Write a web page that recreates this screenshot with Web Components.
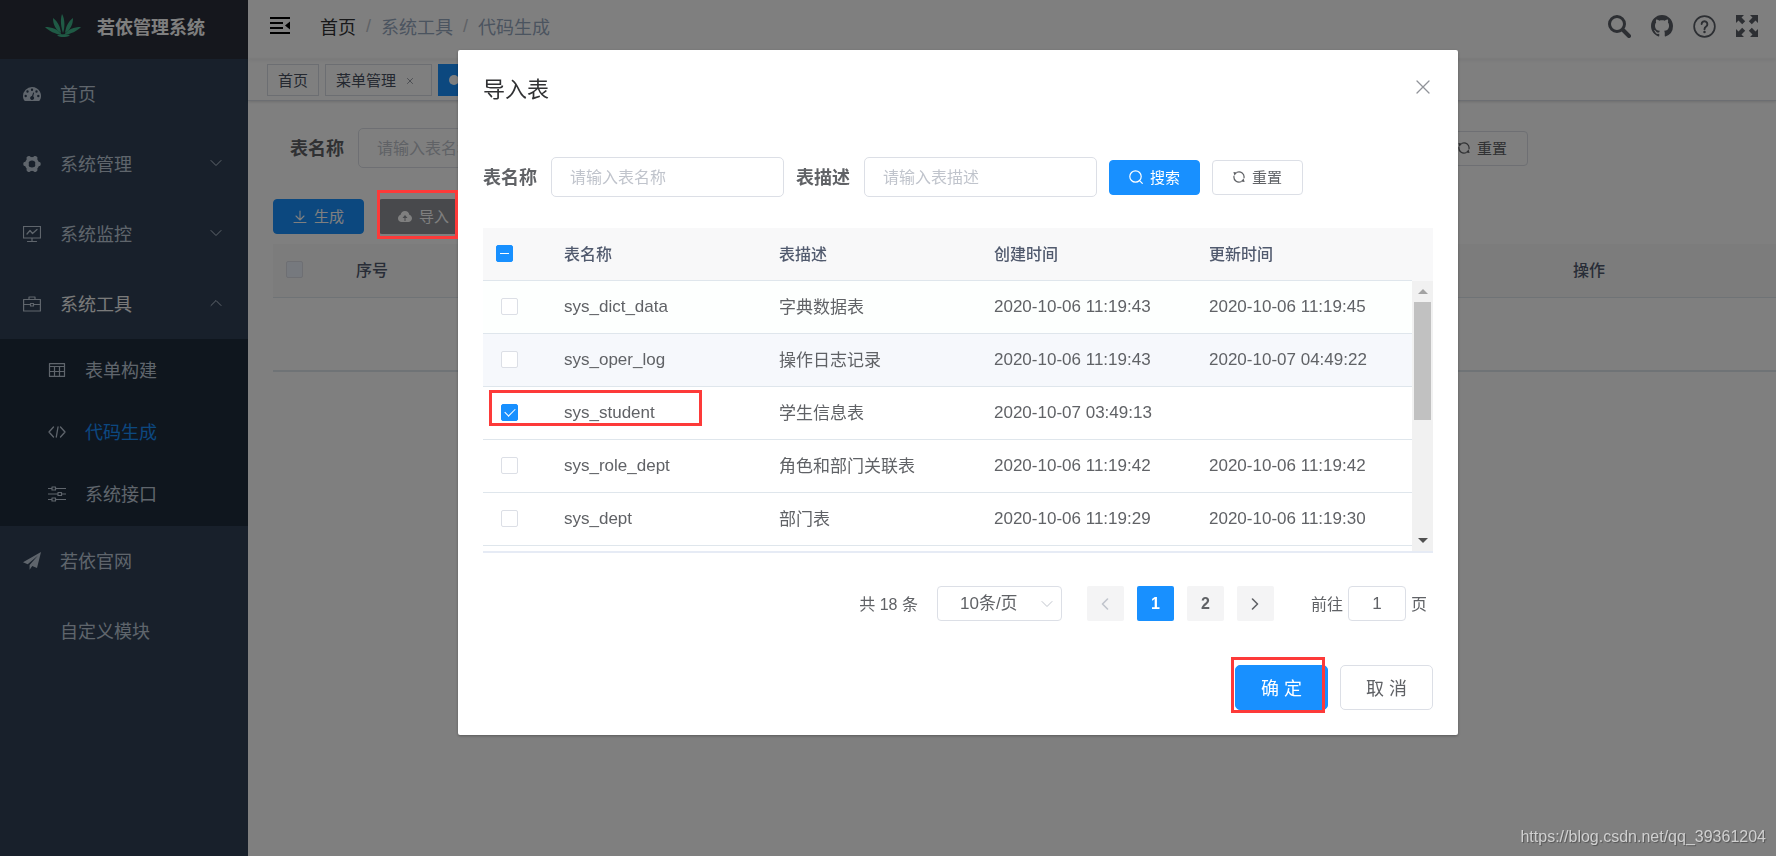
<!DOCTYPE html>
<html lang="zh-CN">
<head>
<meta charset="utf-8">
<title>若依管理系统</title>
<style>
html, body { margin: 0; height: 100%; }
body {
  font-family: "Liberation Sans", "Noto Sans CJK SC", sans-serif;
  font-size: 17px; color: #606266; background: #fff; overflow: hidden;
}
</style>
</head>
<body>
<ry-app></ry-app>
<script>
const line = (d, w = 1) => `<path d="${d}" fill="none" stroke="currentColor" stroke-width="${w}" stroke-linecap="round" stroke-linejoin="round"/>`;
const ICONS = {
  logo: ['0 0 36 24', `<g fill="#3fb58a"><path d="M17 0c3 5 3 13 1 19-2-6-3-13-1-19z"/><path d="M8 4c5 4 7 8 8 15C11 16 8 11 8 4z"/><path d="M28 4c-5 4-7 8-8 15 5-3 8-8 8-15z"/><path d="M0 13c7 0 13 2 17 8C10 20 4 17 0 13z"/><path d="M36 13c-7 0-13 2-17 8 7-1 13-4 17-8z"/><path d="M12 21c4-1 9-1 13 0-2 2-5 2-7 2s-4 0-6-2z"/></g>`],
  dashboard: ['0 0 18 14', `<path fill="currentColor" fill-rule="evenodd" d="M9 0a9 9 0 0 0-9 9c0 1.700.5 3.300 1.300 4.600.2.300.5.400.8.400h13.800c.3 0 .6-.1.8-.4A9 9 0 0 0 9 0zM9 1.500a1.200 1.200 0 1 1 0 2.400 1.200 1.200 0 0 1 0-2.400zM4.500 3.300a1.200 1.200 0 1 1 0 2.400 1.200 1.200 0 0 1 0-2.400zM13.500 3.300a1.200 1.200 0 1 1 0 2.400 1.200 1.200 0 0 1 0-2.400zM2.700 7.800a1.200 1.200 0 1 1 0 2.400 1.200 1.200 0 0 1 0-2.400zM15.300 7.800a1.200 1.200 0 1 1 0 2.400 1.200 1.200 0 0 1 0-2.400zM10.200 5.500l1 .3-1 3.500a2 2 0 1 1-1.200-.3z"/>`],
  gear: ['0 0 18 18', `<circle cx="9" cy="9" r="5.300" fill="none" stroke="currentColor" stroke-width="3.400"/>` + line('M14.500 9h1M12 14.200l.2.400M6 14.200l-.2.400M3.500 9h-1M6 3.800l-.2-.4M12 3.800l.2-.4', 4.6)],
  monitor: ['0 0 18 18', line('M.5 1.500h17v11.500H.5zM9 13v3.500M4.500 16.500h9M4 9l3-3.500 2.500 3L14 4.500', 1.2)],
  toolbox: ['0 0 18 16', line('M.6 3.500h16.800v11.500H.6zM6 3.500V1h6v2.500M1 8.500h6.500M10.500 8.500H17M7.500 7.500h3v2.500h-3z', 1.2)],
  grid: ['0 0 18 14', line('M1.500 .6h15v12.800h-15zM1.500 3.500h15M1.500 8.500h15M6.500 3.500v10M11.500 3.500v10', 1.2)],
  code: ['0 0 18 14', line('M5.500 2L1 7l4.500 5M12.500 2L17 7l-4.500 5M10 2L8.300 12', 1.3)],
  sliders: ['0 0 18 16', line('M.5 2.500h3.500M7.500 2.500H17.500M.5 8h9.500M13.500 8h4M.5 13.500h3.500M7.500 13.500h10M4 1h3.500v3H4zM10 6.500h3.500v3H10zM4 12h3.500v3H4z', 1.2)],
  plane: ['0 0 18 18', `<path fill="currentColor" d="M18 0L0 10.200l4.700 2L15 3.600 6.600 13v4.700l2.600-3.600 4.800 2z"/>`],
  down: ['0 0 12 8', line('M1 1.500l5 5 5-5')],
  up: ['0 0 12 8', line('M1 6.500l5-5 5 5')],
  left: ['0 0 8 12', line('M6.500 1l-5 5 5 5', 1.600)],
  right: ['0 0 8 12', line('M1.500 1l5 5-5 5', 1.600)],
  close: ['0 0 14 14', line('M1 1l12 12M13 1L1 13', 1.3)],
  fold: ['0 0 20 18', `<path fill="currentColor" d="M0 0h20v2H0zM0 5h13v2H0zM0 10h13v2H0zM0 15h20v2H0zM20 4.500v8l-5-4z"/>`],
  find: ['0 0 23 23', `<circle cx="9" cy="9" r="7.500" fill="none" stroke="currentColor" stroke-width="3"/>` + line('M15 15l6 6', 4)],
  github: ['0 0 16 16', `<path fill="currentColor" d="M8 0C3.580 0 0 3.580 0 8c0 3.540 2.290 6.530 5.470 7.590.4.070.55-.17.55-.38 0-.19-.01-.82-.01-1.490-2.010.37-2.530-.49-2.690-.94-.09-.23-.48-.94-.82-1.130-.28-.15-.68-.52-.01-.53.63-.01 1.080.58 1.230.82.72 1.210 1.870.87 2.330.66.07-.52.28-.87.51-1.070-1.780-.2-3.640-.89-3.640-3.950 0-.87.31-1.590.82-2.150-.08-.2-.36-1.020.08-2.120 0 0 .67-.21 2.200.82.64-.18 1.320-.27 2-.27.68 0 1.360.09 2 .27 1.530-1.040 2.200-.82 2.200-.82.44 1.100.16 1.920.08 2.120.51.56.82 1.270.82 2.150 0 3.070-1.870 3.750-3.650 3.950.29.25.54.73.54 1.480 0 1.070-.01 1.930-.01 2.200 0 .21.15.46.55.38A8.013 8.013 0 0 0 16 8c0-4.420-3.580-8-8-8z"/>`],
  help: ['0 0 24 24', `<circle cx="12" cy="12" r="10.800" fill="none" stroke="currentColor" stroke-width="1.800"/>` + line('M9 9.500a3 3 0 1 1 4.700 2.500c-1.200.8-1.700 1.300-1.700 2.800', 2) + `<circle cx="12" cy="17.800" r="1.300" fill="currentColor"/>`],
  full: ['0 0 22 22', `<path fill="currentColor" d="M0 0h8L5.500 2.500l3.700 3.700-3 3-3.700-3.700L0 8zM22 0h-8l2.500 2.500-3.700 3.700 3 3 3.700-3.700L22 8zM0 22h8l-2.500-2.500 3.700-3.700-3-3-3.700 3.700L0 14zM22 22h-8l2.500-2.500-3.700-3.700 3-3 3.700 3.700L22 14z"/>`],
  download: ['0 0 14 14', line('M7 1v8.500M3 6l4 4 4-4M1 12.500h12', 1.1)],
  cloud: ['0 0 14 12', `<path fill="currentColor" fill-rule="evenodd" d="M7 0c2.300 0 4 1.500 4.300 3.700C13 4.300 14 5.700 14 7.300 14 9.700 12.200 11 10.200 11H3.600C1.600 11 0 9.500 0 7.400c0-1.700 1-3 2.600-3.600C3 1.500 4.700 0 7 0zM7 4L4.500 7h2v3h1V7h2z"/>`],
  search: ['0 0 14 14', `<circle cx="6.500" cy="6.500" r="5.700" fill="none" stroke="currentColor" stroke-width="1.200"/>` + line('M10.800 10.800l2.500 2.500', 1.2)],
  refresh: ['0 0 12 12', line('M4 1.200A5.200 5.200 0 0 1 11 7M8 10.800A5.200 5.200 0 0 1 1 5', 1.2) + `<path fill="currentColor" d="M.4 1l4 .6L1.400 4.600zM11.600 11l-4-.6 3-3z"/>`],
};

class View extends HTMLElement {
  connectedCallback() {
    if (this.shadowRoot) return;
    const t = document.createElement('template');
    t.innerHTML = `<style>*{box-sizing:border-box}${this.css()}</style>${this.html()}`;
    this.attachShadow({ mode: 'open' }).append(t.content.cloneNode(true));
  }
  css() { return ''; }
  html() { return '<slot></slot>'; }
}
const define = (name, css, html) => customElements.define(name, class extends View {
  css() { return css; }
  html() { return typeof html === 'function' ? html(this) : html; }
});

define('ry-icon', `:host{display:inline-flex;flex:none} svg{display:block}`, el => {
  const [box, body] = ICONS[el.getAttribute('name')];
  const [, , w, h] = box.split(' ').map(Number);
  const width = Number(el.getAttribute('size')) || w;
  return `<svg viewBox="${box}" width="${width}" height="${Math.round(width * h / w)}" aria-hidden="true">${body}</svg>`;
});

define('ry-button', `
  :host{display:inline-flex}
  button{font:inherit;font-size:15px;color:#606266;background:#fff;border:1px solid #dcdfe6;border-radius:4px;
    height:35px;width:91px;padding:0;display:flex;align-items:center;justify-content:center;gap:7px;white-space:nowrap;cursor:pointer}
  span{padding-bottom:2px}
  :host([type=primary]) button{background:#1890ff;border-color:#1890ff;color:#fff}
  :host([type=info]) button{background:#909399;border-color:#909399;color:#fff}
  :host([size=large]) button{height:45px;width:93px;font-size:18px;border-radius:5px}`,
  el => `<button type="button">${el.hasAttribute('icon') ? `<ry-icon name="${el.getAttribute('icon')}"></ry-icon>` : ''}<span><slot></slot></span></button>`);

define('ry-field', `
  :host{display:flex;align-items:center}
  label{font-size:18px;font-weight:700;color:#606266;width:68px;padding-bottom:2px;white-space:nowrap}
  input{font:inherit;font-size:16px;width:233px;height:40px;border:1px solid #dcdfe6;border-radius:5px;padding:1px 18px 0;background:#fff;color:#606266;outline:0}
  input::placeholder{color:#c0c4cc;opacity:1}`,
  el => `<label for="in">${el.getAttribute('label')}</label><input id="in" type="text" placeholder="请输入${el.getAttribute('label')}">`);

define('ry-check', `
  :host{display:block;width:17px;height:17px}
  input{appearance:none;display:grid;place-items:center;margin:0;width:17px;height:17px;border:1px solid #dcdfe6;border-radius:2px;background:#fff}
  input[disabled]{background:#edf2fc}
  :host([state=on]) input,:host([state=mixed]) input{background:#1890ff;border-color:#1890ff}
  :host([state=mixed]) input::after{content:"";width:9px;height:1px;background:#fff}
  :host([state=on]) input::after{content:"";width:5px;height:9px;margin-bottom:3px;border:solid #fff;border-width:0 1px 1px 0;transform:rotate(45deg)}`,
  el => `<input type="checkbox" aria-label="${el.getAttribute('label')}"${el.getAttribute('state') === 'on' ? ' checked' : ''}${el.hasAttribute('disabled') ? ' disabled' : ''}>`);

define('ry-mark', `:host{display:block;position:absolute;border:3px solid #fd3a39;box-sizing:border-box;pointer-events:none}`, '');

define('ry-menu-item', `
  :host{display:block;color:#bfcbd9;font-size:18px}
  a{display:flex;align-items:center;height:70px;padding:0 26px 0 23px;color:inherit;text-decoration:none}
  .ico{width:37px;display:flex;align-items:center}
  .txt{flex:1;padding-bottom:2px;white-space:nowrap}
  .arrow{margin-bottom:2px}
  :host([open]){color:#f4f4f5}
  :host([open]) .ico,:host([open]) .arrow{color:#bfcbd9}
  :host([sub]) a{height:62px;padding-left:48px}
  :host([active]) .txt{color:#1890ff}`,
  el => {
    const ico = el.getAttribute('icon'), arrow = el.getAttribute('arrow');
    return `<a href="#"><span class="ico">${ico ? `<ry-icon name="${ico}"></ry-icon>` : ''}</span><span class="txt"><slot></slot></span>${arrow ? `<ry-icon class="arrow" name="${arrow}"></ry-icon>` : ''}</a>`;
  });

define('ry-sidebar', `
  :host{display:block;width:248px;background:#304156;flex:none}
  .logo{height:59px;background:#2b2f3a;display:flex;align-items:center;gap:16px;padding-left:45px;padding-bottom:8px}
  h1{margin:0;font-size:18px;font-weight:700;color:#fff;white-space:nowrap}
  .sub{background:#1f2d3d;padding-bottom:1px}`,
  `<header class="logo"><ry-icon name="logo"></ry-icon><h1>若依管理系统</h1></header>
  <nav>
    <ry-menu-item icon="dashboard">首页</ry-menu-item>
    <ry-menu-item icon="gear" arrow="down">系统管理</ry-menu-item>
    <ry-menu-item icon="monitor" arrow="down">系统监控</ry-menu-item>
    <ry-menu-item icon="toolbox" arrow="up" open>系统工具</ry-menu-item>
    <div class="sub">
      <ry-menu-item icon="grid" sub>表单构建</ry-menu-item>
      <ry-menu-item icon="code" sub active>代码生成</ry-menu-item>
      <ry-menu-item icon="sliders" sub>系统接口</ry-menu-item>
    </div>
    <ry-menu-item icon="plane">若依官网</ry-menu-item>
    <ry-menu-item>自定义模块</ry-menu-item>
  </nav>`);

define('ry-navbar', `
  :host{display:flex;align-items:center;justify-content:space-between;height:59px;padding:0 18px 7px 22px;box-sizing:border-box;box-shadow:0 1px 4px rgba(0,21,41,.08)}
  nav{display:flex;align-items:center;font-size:18px;color:#97a8be}
  nav ry-icon{color:#000;margin-right:30px}
  nav a{color:#303133;text-decoration:none}
  i{font-style:normal;color:#c0c4cc;margin:0 10px}
  .tools{display:flex;align-items:center;gap:20px;color:#5a5e66}`,
  `<nav aria-label="breadcrumb"><ry-icon name="fold"></ry-icon><a href="#">首页</a><i>/</i><span>系统工具</span><i>/</i><span>代码生成</span></nav>
  <div class="tools"><ry-icon name="find"></ry-icon><ry-icon name="github" size="22"></ry-icon><ry-icon name="help" size="23"></ry-icon><ry-icon name="full"></ry-icon></div>`);

define('ry-tags', `
  :host{display:flex;align-items:center;gap:6px;height:42px;padding:0 19px;box-sizing:border-box;border-bottom:1px solid #d8dce5;box-shadow:0 1px 3px rgba(0,0,0,.12),0 0 3px rgba(0,0,0,.04)}
  a{display:flex;align-items:center;height:32px;padding:0 10px;border:1px solid #d8dce5;color:#495060;font-size:15px;text-decoration:none;background:#fff}
  .shut{margin:2px 8px 0 11px}
  .on{background:#1890ff;border-color:#1890ff;width:106px}
  .on::before{content:"";width:10px;height:10px;border-radius:50%;background:#fff}`,
  `<a href="#">首页</a><a href="#">菜单管理<ry-icon class="shut" name="close" size="6"></ry-icon></a><a class="on" href="#" aria-label="代码生成"></a>`);

define('ry-page', `
  :host{display:block;padding:27px 0 0 25px}
  form{display:flex;align-items:center;justify-content:space-between;padding-left:17px;margin-right:248px}
  .bar{display:flex;gap:14px;margin:31px 0 10px}
  table{width:100%;border-collapse:collapse;table-layout:fixed}
  th{height:53px;padding:0 12px 2px;background:#f8f8f9;border-bottom:1px solid #dfe6ec;color:#515a6e;font-size:16px;font-weight:500}
  th:first-child{padding-left:13px}
  td{height:74px;padding:0;border-bottom:2px solid #dfe6ec}`,
  `<form><ry-field label="表名称"></ry-field><ry-button icon="refresh">重置</ry-button></form>
  <div class="bar"><ry-button type="primary" icon="download">生成</ry-button><ry-button type="info" icon="cloud">导入</ry-button></div>
  <table>
    <colgroup><col style="width:69px"><col style="width:60px"><col><col style="width:374px"></colgroup>
    <thead><tr><th><ry-check disabled label="全选"></ry-check></th><th>序号</th><th></th><th>操作</th></tr></thead>
    <tbody><tr><td colspan="4"></td></tr></tbody>
  </table>`);

const ROWS = [
  ['sys_dict_data', '字典数据表', '2020-10-06 11:19:43', '2020-10-06 11:19:45'],
  ['sys_oper_log', '操作日志记录', '2020-10-06 11:19:43', '2020-10-07 04:49:22'],
  ['sys_student', '学生信息表', '2020-10-07 03:49:13', ''],
  ['sys_role_dept', '角色和部门关联表', '2020-10-06 11:19:42', '2020-10-06 11:19:42'],
  ['sys_dept', '部门表', '2020-10-06 11:19:29', '2020-10-06 11:19:30'],
];
const COLS = '<colgroup><col style="width:69px"><col><col><col><col></colgroup>';

define('ry-import-table', `
  :host{display:block;border-bottom:2px solid #e6ebf5}
  .head{background:#f8f8f9;padding-right:21px}
  table{width:100%;border-collapse:separate;border-spacing:0;table-layout:fixed}
  th,td{height:53px;padding:0 12px;border-bottom:1px solid #dfe6ec;text-align:left;white-space:nowrap}
  th{color:#515a6e;font-size:16px;font-weight:500;padding-bottom:2px}
  th:first-child{padding-left:13px}
  td:first-child{padding:0 0 2px 18px}
  td:nth-child(3){padding-bottom:3px}
  .body{display:flex;height:270px}
  .view{flex:1;overflow:hidden;position:relative}
  .view tr:nth-child(1) td{background:#fdfffe}
  .view tr:nth-child(2) td{background:#f6f8fc}
  .track{width:21px;background:#f1f1f1;display:flex;flex-direction:column;align-items:center}
  .track i{height:21px;display:flex;align-items:center}
  .track i::before{content:"";border:5px solid transparent;border-top:0;border-bottom-color:#a3a3a3}
  .track i:last-child::before{border-top:5px solid #505050;border-bottom:0}
  .thumb{width:17px;height:118px;background:#c1c1c1;margin-bottom:auto}
  ry-mark{left:6px;top:109px;width:213px;height:36px}`,
  `<div class="head"><table>${COLS}<thead><tr><th><ry-check state="mixed" label="全选"></ry-check></th><th>表名称</th><th>表描述</th><th>创建时间</th><th>更新时间</th></tr></thead></table></div>
  <div class="body"><div class="view"><table>${COLS}<tbody>${ROWS.map(r =>
    `<tr><td><ry-check label="${r[0]}"${r[0] === 'sys_student' ? ' state="on"' : ''}></ry-check></td>${r.map(c => `<td>${c}</td>`).join('')}</tr>`).join('')}</tbody></table><ry-mark></ry-mark></div>
  <div class="track"><i></i><div class="thumb"></div><i></i></div></div>`);

define('ry-pagination', `
  :host{display:flex;align-items:center;justify-content:flex-end;font-size:16px;color:#606266;padding-right:6px}
  .total,.unit{padding-bottom:2px}
  .size{display:grid;align-items:center;margin:0 25px 0 19px}
  .size>*{grid-area:1/1}
  .size ry-icon{justify-self:end;margin-right:9px;color:#c0c4cc}
  select,input{appearance:none;font:inherit;font-size:17px;height:35px;border:1px solid #dcdfe6;border-radius:4px;background:#fff;color:#606266}
  select{width:125px;padding:0 0 0 22px}
  input{width:58px;text-align:center;padding:0;margin:0 5px}
  .pages{display:flex;gap:13px;margin-right:37px}
  button{width:37px;height:35px;border:0;border-radius:2px;background:#f4f4f5;color:#606266;font:inherit;font-weight:700;padding:0;display:grid;place-items:center}
  button[disabled]{color:#c0c4cc}
  .on{background:#1890ff;color:#fff}
  label{display:flex;align-items:center}`,
  `<span class="total">共 18 条</span>
  <span class="size"><select aria-label="每页条数"><option>10条/页</option></select><ry-icon name="down"></ry-icon></span>
  <span class="pages"><button type="button" disabled aria-label="上一页"><ry-icon name="left"></ry-icon></button><button type="button" class="on">1</button><button type="button">2</button><button type="button" aria-label="下一页"><ry-icon name="right"></ry-icon></button></span>
  <label><span class="unit">前往</span><input type="text" value="1"><span class="unit">页</span></label>`);

define('ry-dialog', `
  :host{display:block;width:1000px;box-sizing:border-box;background:#fff;border-radius:2px;box-shadow:0 1px 3px rgba(0,0,0,.3);padding:25px}
  header{display:flex;justify-content:space-between;align-items:center;height:24px;padding-right:3px;margin-bottom:58px}
  h2{margin:0;font-size:22px;font-weight:400;color:#303133}
  .x{border:0;background:none;padding:0;color:#909399;display:flex}
  form{display:flex;align-items:center;gap:12px;margin-bottom:31px}
  ry-pagination{margin:33px 0 44px}
  footer{display:flex;justify-content:flex-end;gap:12px;position:relative}
  ry-mark{right:108px;top:-8px;width:94px;height:56px}`,
  `<header><h2><slot name="title"></slot></h2><button class="x" type="button" aria-label="关闭"><ry-icon name="close"></ry-icon></button></header>
  <form><ry-field label="表名称"></ry-field><ry-field label="表描述"></ry-field><ry-button type="primary" icon="search">搜索</ry-button><ry-button icon="refresh">重置</ry-button></form>
  <ry-import-table></ry-import-table>
  <ry-pagination></ry-pagination>
  <footer><ry-button type="primary" size="large">确 定</ry-button><ry-button size="large">取 消</ry-button><ry-mark></ry-mark></footer>`);

define('ry-app', `
  :host{display:flex;min-height:100vh}
  main{flex:1;min-width:0}
  .mask{position:fixed;inset:0;background:rgba(0,0,0,.5);display:flex;justify-content:center;align-items:flex-start;padding:50px 0 0 140px}
  .import{left:377px;top:190px;width:81px;height:49px}
  .mark-url{position:absolute;right:10px;bottom:9px;font-size:16px;line-height:20px;color:#d0d0d0;text-shadow:1px 1px 1px rgba(0,0,0,.35)}`,
  `<ry-sidebar></ry-sidebar>
  <main><ry-navbar></ry-navbar><ry-tags></ry-tags><ry-page></ry-page></main>
  <div class="mask"><ry-dialog><span slot="title">导入表</span></ry-dialog><ry-mark class="import"></ry-mark><span class="mark-url">https://blog.csdn.net/qq_39361204</span></div>`);
</script>
</body>
</html>
